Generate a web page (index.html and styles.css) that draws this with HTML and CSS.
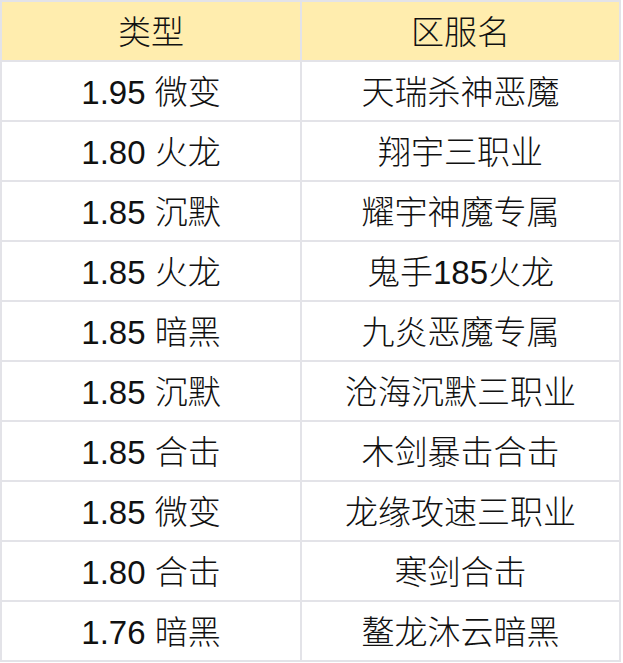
FILE: index.html
```html
<!DOCTYPE html>
<html lang="zh">
<head>
<meta charset="utf-8">
<link rel="stylesheet" href="styles.css">
</head>
<body>
<table class="server-table">
  <thead>
    <tr><th class="col-type"><span class="cjk">类型</span></th><th class="col-name"><span class="cjk">区服名</span></th></tr>
  </thead>
  <tbody>
    <tr><td>1.95 <span class="cjk">微变</span></td><td><span class="cjk">天瑞杀神恶魔</span></td></tr>
    <tr><td>1.80 <span class="cjk">火龙</span></td><td><span class="cjk">翔宇三职业</span></td></tr>
    <tr><td>1.85 <span class="cjk">沉默</span></td><td><span class="cjk">耀宇神魔专属</span></td></tr>
    <tr><td>1.85 <span class="cjk">火龙</span></td><td><span class="cjk">鬼手</span>185<span class="cjk">火龙</span></td></tr>
    <tr><td>1.85 <span class="cjk">暗黑</span></td><td><span class="cjk">九炎恶魔专属</span></td></tr>
    <tr><td>1.85 <span class="cjk">沉默</span></td><td><span class="cjk">沧海沉默三职业</span></td></tr>
    <tr><td>1.85 <span class="cjk">合击</span></td><td><span class="cjk">木剑暴击合击</span></td></tr>
    <tr><td>1.85 <span class="cjk">微变</span></td><td><span class="cjk">龙缘攻速三职业</span></td></tr>
    <tr><td>1.80 <span class="cjk">合击</span></td><td><span class="cjk">寒剑合击</span></td></tr>
    <tr><td>1.76 <span class="cjk">暗黑</span></td><td><span class="cjk">鳌龙沐云暗黑</span></td></tr>
  </tbody>
</table>
</body>
</html>
```

FILE: styles.css
```css
html, body {
  margin: 0;
  padding: 0;
  background: #ffffff;
}

.server-table {
  border-collapse: separate;
  border-spacing: 2px;
  background: #e3e3e8;
  width: 621px;
  table-layout: fixed;
  font-family: "Liberation Sans", Arial, "Noto Sans CJK SC", sans-serif;
  font-size: 33px;
  color: #111111;
}

.col-type {
  width: 298px;
}

.server-table th,
.server-table td {
  height: 58px;
  padding: 0;
  text-align: center;
  vertical-align: middle;
  font-weight: 400;
  background: #ffffff;
  line-height: 1;
}

.server-table th {
  background: #ffedae;
}

.cjk {
  font-family: "Noto Sans CJK SC", sans-serif;
  font-weight: 300;
}
```
